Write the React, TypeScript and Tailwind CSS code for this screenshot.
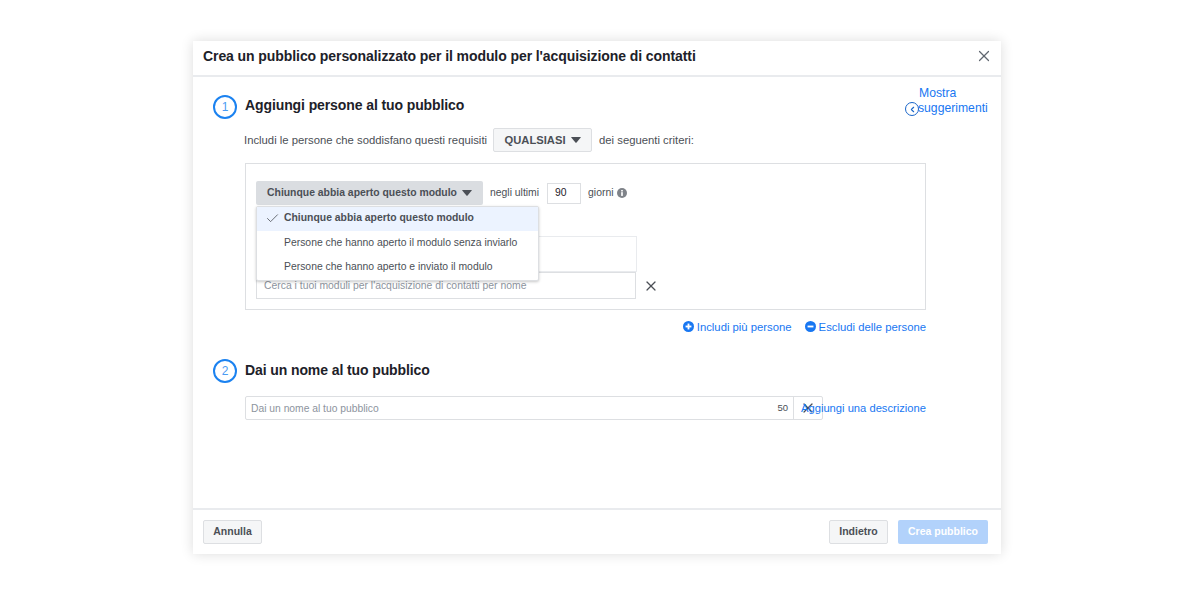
import { Check, ChevronLeft, X } from "lucide-react";

const font = "font-['Liberation_Sans',Arial,sans-serif]";

function StepCircle({ n }: { n: number }) {
  return (
    <div className="flex h-[24px] w-[24px] shrink-0 items-center justify-center rounded-full border-2 border-[#1b82f0] text-[12px] text-[#4a9bf3]">
      {n}
    </div>
  );
}

function Caret({ className }: { className: string }) {
  return (
    <svg viewBox="0 0 10 6" className={className} fill="#4b4f56">
      <path d="M0.3 0.5 Q0 0 0.7 0 H9.3 Q10 0 9.7 0.5 L5.6 5.6 Q5 6 4.4 5.6 Z" />
    </svg>
  );
}

function FooterButton({ label }: { label: string }) {
  return (
    <button className="flex h-[24px] w-[59px] items-center justify-center rounded-[2px] border border-[#dddfe2] bg-[#f5f6f7] text-[10.5px] font-bold text-[#4b4f56]">
      {label}
    </button>
  );
}

function CircleIcon({ minus }: { minus?: boolean }) {
  return (
    <svg viewBox="0 0 12 12" className="mb-[2px] h-[11px] w-[11px]">
      <circle cx="6" cy="6" r="6" fill="#1877f2" />
      <path d="M2.8 6h6.4" stroke="#fff" strokeWidth="2" />
      {!minus && <path d="M6 2.8v6.4" stroke="#fff" strokeWidth="2" />}
    </svg>
  );
}

export default function App() {
  return (
    <div className={`${font} h-[600px] w-[1200px] overflow-hidden bg-white pl-[193px] pt-[41px]`}>
      <div className="flex h-[513px] w-[808px] flex-col bg-white shadow-[0_0_12px_rgba(0,0,0,0.14)]">
        {/* header */}
        <div className="flex h-[36px] shrink-0 items-center justify-between border-b-2 border-[#e9ebee] pl-[10px] pr-[8px]">
          <div className="pb-[3px] text-[14px] font-bold tracking-[-0.08px] text-[#1d2129]">
            Crea un pubblico personalizzato per il modulo per l'acquisizione di contatti
          </div>
          <X className="mb-[4px] h-[18px] w-[18px] text-[#606770]" strokeWidth={1.6} />
        </div>

        {/* body */}
        <div className="relative flex-1 pl-[20px] pr-[75px] pt-[18px]">
          <div className="absolute left-[725px] top-[9px] w-[72px] text-[12.2px] leading-[15px] text-[#1877f2]">
            <div className="pl-[1px]">Mostra</div>
            <div className="relative">
              suggerimenti
              <span className="absolute left-[-13px] top-[1px] flex h-[14px] w-[14px] items-center justify-center rounded-full border border-[#1a66c9]">
                <ChevronLeft className="h-[9px] w-[9px] text-[#1a66c9]" strokeWidth={3} />
              </span>
            </div>
          </div>

          <div className="flex items-center gap-[8px]">
            <StepCircle n={1} />
            <div className="pb-[3px] text-[14px] font-bold tracking-[-0.1px] text-[#1d2129]">Aggiungi persone al tuo pubblico</div>
          </div>

          <div className="ml-[31px] mt-[9px] flex items-center text-[11.3px] text-[#4b4f56]">
            <span>Includi le persone che soddisfano questi requisiti</span>
            <button className="ml-[6px] flex h-[24px] w-[99px] items-center justify-center gap-[5px] rounded-[2px] border border-[#dddfe2] bg-[#f5f6f7] text-[11.2px] font-bold text-[#4b4f56]">
              QUALSIASI
              <Caret className="h-[6px] w-[10px]" />
            </button>
            <span className="ml-[7px]">dei seguenti criteri:</span>
          </div>

          {/* criteria box */}
          <div className="relative ml-[32px] mt-[11px] h-[147px] w-[681px] border border-[#dddfe2] pl-[10px] pt-[17px]">
            <div className="flex items-center text-[10.4px] text-[#4b4f56]">
              <button className="flex h-[24px] w-[227px] items-center justify-center gap-[5px] rounded-[2px] bg-[#dadde1] text-[10.4px] font-bold text-[#4b4f56]">
                Chiunque abbia aperto questo modulo
                <Caret className="h-[6px] w-[10px]" />
              </button>
              <span className="ml-[7px]">negli ultimi</span>
              <div className="ml-[8px] flex h-[21px] w-[34px] items-center border border-[#dddfe2] pl-[7px] text-[#1d2129]">90</div>
              <span className="ml-[7px]">giorni</span>
              <svg viewBox="0 0 12 12" className="mb-[1px] ml-[3px] h-[10px] w-[10px]">
                <circle cx="6" cy="6" r="6" fill="#7f8389" />
                <rect x="5" y="5" width="2" height="4.5" fill="#fff" />
                <rect x="5" y="2.4" width="2" height="1.8" fill="#fff" />
              </svg>
            </div>

            <div className="mt-[31px] h-[36px] w-[381px] border border-[#e9ebee]" />
            <div className="flex items-center">
              <div className="flex h-[27px] w-[380px] items-center border border-[#dddfe2] pl-[7px] text-[10.4px] text-[#8d949e]">
                Cerca i tuoi moduli per l'acquisizione di contatti per nome
              </div>
              <X className="ml-[7px] h-[16px] w-[16px] text-[#4b4f56]" strokeWidth={1.8} />
            </div>

            {/* dropdown menu */}
            <div className="absolute left-[10px] top-[42px] w-[283px] rounded-[2px] border border-[#dddfe2] bg-white text-[10.4px] shadow-[0_1px_3px_rgba(0,0,0,0.22)]">
              <div className="flex h-[24px] items-center bg-[#ecf3ff] pb-[2px] font-bold text-[#4b4f56]">
                <Check className="ml-[8px] mr-[4px] h-[15px] w-[15px] text-[#4b4f56]" strokeWidth={1.3} />
                Chiunque abbia aperto questo modulo
              </div>
              <div className="flex h-[25px] items-center pb-[2px] pl-[27px] text-[#4b4f56]">Persone che hanno aperto il modulo senza inviarlo</div>
              <div className="flex h-[24px] items-center pb-[2px] pl-[27px] text-[#4b4f56]">Persone che hanno aperto e inviato il modulo</div>
            </div>
          </div>

          {/* include / exclude links */}
          <div className="ml-[32px] mt-[9px] flex w-[681px] items-center justify-end text-[11.3px] text-[#1877f2]">
            <CircleIcon />
            <span className="ml-[3px]">Includi più persone</span>
            <span className="ml-[13px] flex"><CircleIcon minus /></span>
            <span className="ml-[3px]">Escludi delle persone</span>
          </div>

          <div className="mt-[23px] flex items-center gap-[8px]">
            <StepCircle n={2} />
            <div className="text-[14px] font-bold tracking-[-0.1px] text-[#1d2129]">Dai un nome al tuo pubblico</div>
          </div>

          <div className="ml-[32px] mt-[13px] flex w-[681px] items-center">
            <div className="flex h-[24px] w-[578px] shrink-0 items-center rounded-[2px] border border-[#dddfe2] text-[10.3px]">
              <span className="flex-1 pl-[5px] pt-[1px] text-[#8d949e]">Dai un nome al tuo pubblico</span>
              <span className="pr-[5px] text-[9.5px] text-[#4b4f56]">50</span>
              <span className="flex h-full w-[29px] items-center justify-center border-l border-[#dddfe2]">
                <X className="h-[16px] w-[16px] text-[#4b4f56]" strokeWidth={1.8} />
              </span>
            </div>
            <span className="ml-[-22px] whitespace-nowrap text-[11.2px] text-[#1877f2]">Aggiungi una descrizione</span>
          </div>
        </div>

        {/* footer */}
        <div className="flex h-[46px] shrink-0 items-start justify-between border-t-2 border-[#e9ebee] px-[10px] pt-[10px]">
          <FooterButton label="Annulla" />
          <div className="flex items-center gap-[10px] pr-[3px]">
            <FooterButton label="Indietro" />
            <button className="flex h-[24px] w-[90px] items-center justify-center rounded-[2px] bg-[#b2d2fb] text-[10.5px] font-bold text-white">
              Crea pubblico
            </button>
          </div>
        </div>
      </div>
    </div>
  );
}
